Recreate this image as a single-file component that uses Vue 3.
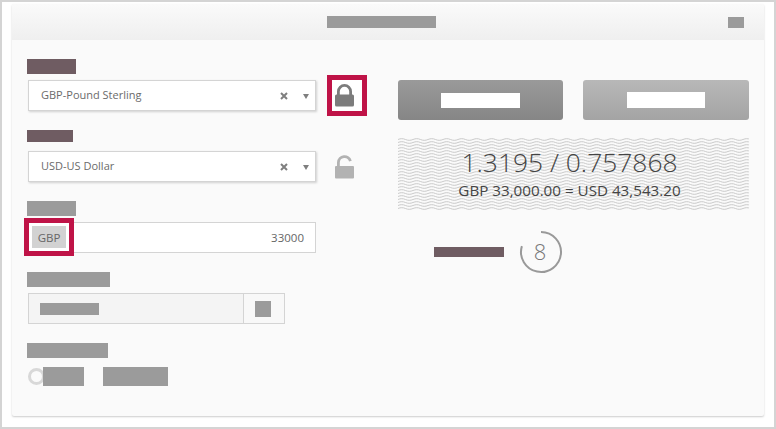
<script setup>
const wave = "url(\"data:image/svg+xml,%3Csvg xmlns='http://www.w3.org/2000/svg' width='15' height='3'%3E%3Cpath d='M0 1.500C2.500 .4 5 .4 7.500 1.500S12.500 2.600 15 1.500' fill='none' stroke='%23c4c4c4' stroke-width='.9'/%3E%3C/svg%3E\")"
</script>

<template>
  <div class="page">
    <div class="card">
      <header class="card-head">
        <span class="block head-title"></span>
        <span class="block head-icon"></span>
      </header>
      <div class="card-body">
        <div class="left">
          <span class="block label dark w-49"></span>
          <div class="row">
            <div class="select">
              <span class="select-text">GBP-Pound Sterling</span>
              <svg class="clear" width="8" height="8" viewBox="0 0 8 8">
                <path d="M1 1l6 6M7 1L1 7" stroke="#7f7f7f" stroke-width="2" />
              </svg>
              <span class="caret"></span>
            </div>
            <div class="lock-box">
              <svg width="21" height="24" viewBox="0 0 21 24">
                <path d="M4.400 11V7.500a6.100 6.100 0 0 1 12.200 0V11" fill="none" stroke="#7c7c7c" stroke-width="2.800" />
                <rect x="1" y="10.500" width="19" height="12" rx="1.500" fill="#7c7c7c" />
              </svg>
            </div>
          </div>
          <span class="block label dark w-46 second"></span>
          <div class="row near">
            <div class="select">
              <span class="select-text">USD-US Dollar</span>
              <svg class="clear" width="8" height="8" viewBox="0 0 8 8">
                <path d="M1 1l6 6M7 1L1 7" stroke="#7f7f7f" stroke-width="2" />
              </svg>
              <span class="caret"></span>
            </div>
            <div class="lock-open">
              <svg width="21" height="24" viewBox="0 0 21 24">
                <path d="M4.400 12V7.500a6.100 6.100 0 0 1 12-1.300" fill="none" stroke="#b2b2b2" stroke-width="2.800" />
                <rect x="1" y="11" width="19" height="12.500" rx="1" fill="#b2b2b2" />
              </svg>
            </div>
          </div>
          <span class="block label w-49 gap"></span>
          <div class="amount">
            <div class="ccy-box"><span class="ccy">GBP</span></div>
            <span class="amount-val">33000</span>
          </div>
          <span class="block label w-83 gap"></span>
          <div class="date">
            <div class="date-field"><span class="block date-text"></span></div>
            <div class="date-btn"><span class="block date-icon"></span></div>
          </div>
          <span class="block label w-81 gap"></span>
          <div class="radios">
            <span class="radio"></span>
            <span class="block radio-a"></span>
            <span class="block radio-b"></span>
          </div>
        </div>
        <div class="right">
          <div class="buttons">
            <div class="btn btn-dark"><span class="btn-text t1"></span></div>
            <div class="btn btn-light"><span class="btn-text t2"></span></div>
          </div>
          <div class="rate" :style="{ backgroundImage: wave }">
            <div class="rate-main">1.3195 / 0.757868</div>
            <div class="rate-sub">GBP 33,000.00 = USD 43,543.20</div>
          </div>
          <div class="timer">
            <span class="block timer-label"></span>
            <div class="ring">
              <svg width="44" height="44" viewBox="0 0 44 44">
                <path d="M22 2A20 20 0 1 1 2.900 16.100" fill="none" stroke="#999" stroke-width="2" />
              </svg>
              <span class="ring-num">8</span>
            </div>
          </div>
        </div>
      </div>
    </div>
  </div>
</template>

<style>
html, body { margin: 0; background: #fff; }
</style>

<style scoped>
.page {
  width: 776px;
  height: 429px;
  box-sizing: border-box;
  border: 2px solid #d4d4d4;
  padding: 2px 10px 10px 10px;
  background: #fff;
  overflow: hidden;
  font-family: "Open Sans", "Liberation Sans", sans-serif;
}
.card {
  height: 412px;
  width: 752px;
  background: #fafafa;
  box-shadow: 0 1px 2px #ccc;
  border-radius: 2px;
}
.card-head {
  height: 36px;
  display: flex;
  align-items: center;
  justify-content: center;
  position: relative;
  background: linear-gradient(#fafafa, #efefef);
}
.block { display: block; background: #9b9b9b; }
.head-title { width: 109px; height: 12px; margin-top: -1px; margin-left: -13px; }
.head-icon { position: absolute; right: 20px; top: 13px; width: 16px; height: 11px; }
.card-body { display: flex; padding-top: 19px; }
.left { width: 371px; padding-left: 15px; box-sizing: border-box; }
.label { height: 15px; }
.dark { background: #6f5c62; }
.w-49 { width: 49px; }
.w-46 { width: 46px; height: 12px; }
.w-83 { width: 83px; }
.w-81 { width: 81px; }
.second { margin-top: 19px; }
.gap { margin-top: 19px; }
.row { display: flex; align-items: center; margin-top: 6px; }
.near { margin-top: 9px; }
.select {
  width: 288px;
  height: 31px;
  margin-left: 1px;
  box-sizing: border-box;
  background: #fff;
  border: 1px solid #d4d4d4;
  box-shadow: 1px 1px 2px #d0d0d0;
  display: flex;
  align-items: center;
  padding-left: 12px;
  font-size: 11px;
  color: #6b6b6b;
}
.select-text { margin-top: -2px; }
.clear { margin-left: auto; }
.caret {
  margin: 2px 6px 0 15px;
  border-left: 3px solid transparent;
  border-right: 3px solid transparent;
  border-top: 5px solid #7f7f7f;
}
.lock-box {
  width: 40px;
  height: 41px;
  box-sizing: border-box;
  margin: -5px 0 -5px 11px;
  border: 5px solid #bf1347;
  background: #fff;
  display: flex;
  align-items: center;
  justify-content: center;
  padding-right: 6px;
}
.lock-open {
  width: 40px;
  margin-left: 11px;
  display: flex;
  justify-content: center;
  padding-right: 6px;
  box-sizing: border-box;
}
.lock-box svg, .lock-open svg { display: block; }
.amount {
  width: 288px;
  height: 31px;
  margin: 6px 0 0 1px;
  box-sizing: border-box;
  background: #fff;
  border: 1px solid #d4d4d4;
  display: flex;
  align-items: center;
  justify-content: flex-end;
  position: relative;
  padding-right: 11px;
  font-size: 11.500px;
  color: #666;
}
.ccy-box {
  position: absolute;
  left: -5px;
  top: -5px;
  width: 50px;
  height: 38px;
  box-sizing: border-box;
  border: 5px solid #bf1347;
  background: #fff;
  padding: 3px;
  display: flex;
}
.ccy {
  flex: 1;
  background: #d2d2d2;
  display: flex;
  align-items: center;
  justify-content: center;
  font-size: 11.500px;
  color: #666;
}
.date { display: flex; margin: 6px 0 0 1px; width: 257px; height: 31px; }
.date-field {
  flex: 1;
  box-sizing: border-box;
  background: #f4f4f4;
  border: 1px solid #d4d4d4;
  display: flex;
  align-items: center;
  padding-left: 11px;
}
.date-text { width: 59px; height: 12px; }
.date-btn {
  width: 41px;
  box-sizing: border-box;
  border: 1px solid #d4d4d4;
  border-left: 0;
  background: #f8f8f8;
  display: flex;
  align-items: center;
  justify-content: center;
  padding-right: 2px;
}
.date-icon { width: 16px; height: 16px; }
.radios { display: flex; align-items: center; margin-top: 9px; position: relative; }
.radio {
  width: 17px;
  height: 17px;
  margin-left: 1px;
  box-sizing: border-box;
  border: 3px solid #d8d8d8;
  border-radius: 50%;
}
.radio-a { width: 41px; height: 19px; margin-left: -2px; position: relative; }
.radio-b { width: 65px; height: 19px; margin-left: 19px; }
.right { width: 351px; margin: 21px 0 0 15px; }
.buttons { display: flex; justify-content: space-between; }
.btn {
  height: 40px;
  border-radius: 3px;
  display: flex;
  align-items: center;
  justify-content: center;
}
.btn-dark { width: 165px; background: linear-gradient(#9a9a9a, #868686); }
.btn-light { width: 166px; background: linear-gradient(#b8b8b8, #a4a4a4); }
.btn-text { background: #fff; display: block; }
.t1 { width: 79px; height: 15px; margin-top: 1px; }
.t2 { width: 78px; height: 16px; margin-top: -1px; }
.rate {
  margin-top: 18px;
  height: 72px;
  background-color: #fafafa;
  text-align: center;
  color: #444;
  padding-right: 8px;
}
.rate-main { font-size: 26.400px; font-weight: 300; line-height: 30px; padding-top: 9px; }
.rate-sub { font-size: 15.200px; line-height: 18px; margin-top: 4px; }
.timer { display: flex; align-items: center; margin-top: 20px; padding-left: 36px; }
.timer-label { width: 70px; height: 10px; background: #6f5c62; }
.ring { position: relative; width: 44px; height: 44px; margin-left: 15px; }
.ring svg { display: block; }
.ring-num {
  position: absolute;
  inset: 0 2px 2px 0;
  display: flex;
  align-items: center;
  justify-content: center;
  font-size: 22px;
  font-weight: 300;
  color: #777;
}
</style>
